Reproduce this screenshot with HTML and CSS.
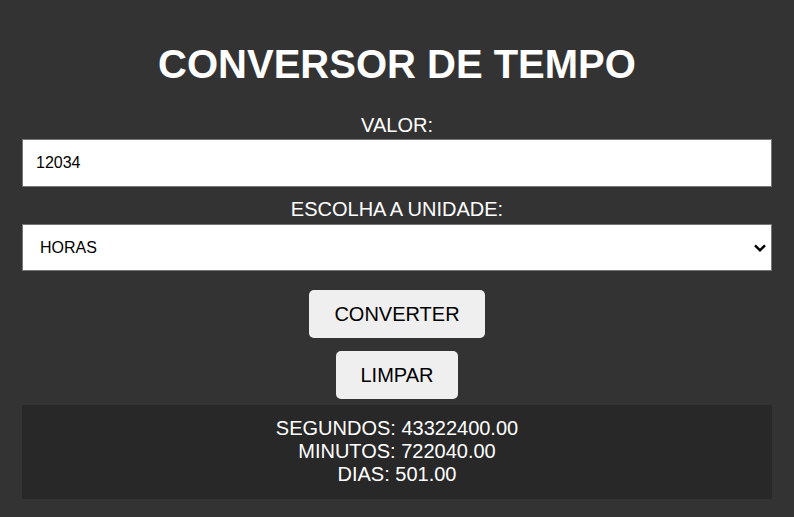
FILE: index.html
```html
<!DOCTYPE html>
<html lang="pt">
<head>
<meta charset="utf-8">
<title>Conversor de Tempo</title>
<link rel="stylesheet" href="styles.css">
</head>
<body>
<main class="app">
  <h1 class="title">CONVERSOR DE TEMPO</h1>
  <label class="label label-valor" for="valor">VALOR:</label>
  <input class="field" id="valor" type="text" value="12034">
  <label class="label label-unidade" for="unidade">ESCOLHA A UNIDADE:</label>
  <div class="select-wrap">
    <select class="field select" id="unidade">
      <option>HORAS</option>
    </select>
    <svg class="chev" width="12" height="8" viewBox="0 0 12 8"><path d="M1 1.3 L6 6.3 L11 1.3" fill="none" stroke="#000" stroke-width="2.4"/></svg>
  </div>
  <button class="btn btn-convert">CONVERTER</button>
  <button class="btn btn-clear">LIMPAR</button>
  <div class="result">
    <div>SEGUNDOS: 43322400.00</div>
    <div>MINUTOS: 722040.00</div>
    <div>DIAS: 501.00</div>
  </div>
</main>
</body>
</html>
```
FILE: styles.css
```css
html, body {
  margin: 0;
  padding: 0;
  background: #333333;
  height: 100%;
}
body {
  font-family: "Liberation Sans", Arial, sans-serif;
  color: #ffffff;
}
.app {
  display: flex;
  flex-direction: column;
  align-items: center;
  padding: 0 22px;
}
.title {
  font-size: 40px;
  font-weight: bold;
  line-height: 50px;
  margin: 39px 0 0;
}
.label {
  font-size: 20px;
  line-height: 23px;
  display: block;
}
.label-valor { margin-top: 25px; }
.label-unidade { margin-top: 11px; }
.field {
  box-sizing: border-box;
  width: 100%;
  height: 48px;
  border: 1px solid #767676;
  background: #ffffff;
  color: #000;
  font-family: "Liberation Sans", Arial, sans-serif;
  font-size: 16px;
  padding: 0 13px;
  margin: 2px 0 0;
  outline: none;
}
.select-wrap {
  position: relative;
  width: 100%;
  margin-top: 3px;
}
.select {
  appearance: none;
  -webkit-appearance: none;
  margin: 0;
  height: 47px;
  padding: 0 17px;
  border-radius: 0;
}
.chev {
  position: absolute;
  right: 6px;
  top: 20px;
  pointer-events: none;
}
.btn {
  box-sizing: border-box;
  height: 48px;
  border: none;
  border-radius: 5px;
  background: #efefef;
  color: #000;
  font-family: "Liberation Sans", Arial, sans-serif;
  font-size: 20px;
  padding: 0 25px;
}
.btn-convert { margin-top: 19px; }
.btn-clear { margin-top: 13px; }
.result {
  box-sizing: border-box;
  width: 100%;
  margin-top: 6px;
  background: #282828;
  text-align: center;
  font-size: 20px;
  line-height: 23px;
  padding: 12px 0;
  height: 94px;
}
```
